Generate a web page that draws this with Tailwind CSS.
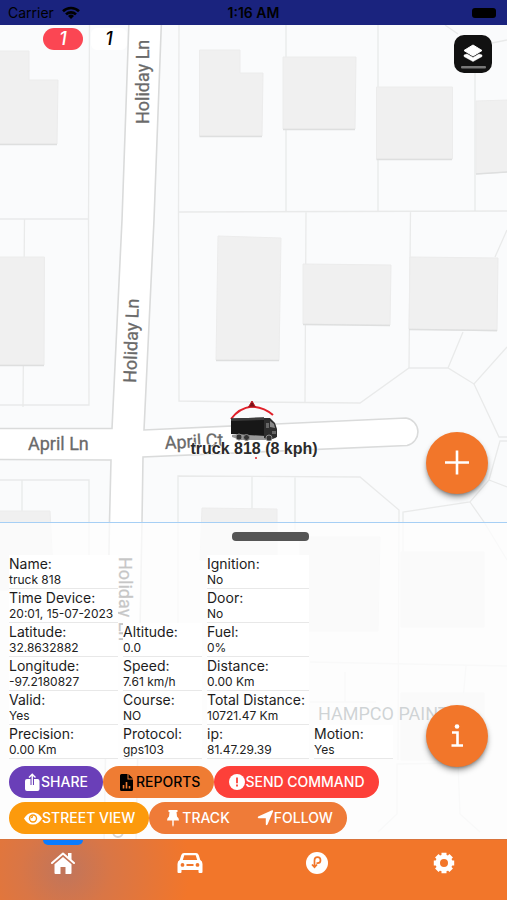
<!DOCTYPE html>
<html lang="en">
<head>
  <meta charset="utf-8">
  <meta name="viewport" content="width=device-width, initial-scale=1">
  <title>truck 818</title>
  <script src="https://cdn.jsdelivr.net/npm/@tailwindcss/browser@4"></script>
</head>
<body class="min-h-screen flex flex-col font-[Inter,sans-serif] text-[#222] bg-[#fafbfc]">

  <!-- status bar -->
  <header class="grid grid-cols-3 items-center h-[25px] px-2 bg-[#1a237e] text-black text-sm">
    <div class="flex items-center gap-2">
      <span>Carrier</span>
      <svg class="w-[18px] h-[13px]" viewBox="0 0 18 13" fill="none" stroke="#000" stroke-width="2.6">
        <path d="M1 5.2a11.5 11.5 0 0 1 16 0"/>
        <path d="M4 8.4a7.2 7.2 0 0 1 10 0"/>
        <path d="M9 13L6 10a4.3 4.3 0 0 1 6 0z" fill="#000" stroke="none"/>
      </svg>
    </div>
    <span class="text-center font-semibold">1:16 AM</span>
    <span class="justify-self-end w-6 h-[10px] mr-[3px] rounded-[3px] bg-black"></span>
  </header>

  <main class="relative flex-1 flex flex-col overflow-hidden">

    <!-- map -->
    <svg class="absolute inset-0 w-full h-full" viewBox="0 25 507 814" preserveAspectRatio="xMidYMid slice">
      <rect x="0" y="25" width="507" height="814" fill="#fafbfc"/>

      <!-- lots -->
      <g fill="none" stroke="#e9eaea" stroke-width="1.3">
        <path d="M89.500 25L88.500 218L89 405H0M0 219H88.500M24.500 219L23 407"/>
        <path d="M179 25L178.500 212L179 401L253 402L360 403L409 368H448L474 384L507 347"/>
        <path d="M179 212L507 211M286 25V211M378 25V211M475 70V211M306 211L305 402M410.500 211L409 368"/>
        <path d="M495 257L507 230M463 332L448 368M474 384L499 437H507M445 25L458 34M492 43L507 40"/>
        <path d="M507 441H500L489 480L470 502L403 512V600M489 480L507 487M470 502L484 522L507 560"/>
        <path d="M178 640V476L360 477L399 510L398 760M252 476V530M295 477V530"/>
        <path d="M0 480H89V560M22 480V512"/>
        <path d="M310 662L507 666M310 702H376M345 672V702M466 666L463 700"/>
        <path d="M378 832L397 814V764L458 763L460 814L480 832"/>
      </g>

      <!-- buildings -->
      <g fill="#f0f0f0" stroke="#ececec" stroke-width="1">
        <path d="M-1 51H29V80H58L57 144H-1z"/>
        <path d="M199.500 50H240V73H263L262 136H199.500z"/>
        <path d="M283 57H356L355 129H283z"/>
        <path d="M376.500 87H452.500V159H376.500z"/>
        <path d="M476 101L508 100V172L476 174z"/>
        <path d="M-1 257H44.500L44 365H-1z"/>
        <path d="M218 236L281 238L279 360.500L216 360z"/>
        <path d="M303 264L391 265L390 325L303 324z"/>
        <path d="M410 257L498 258L497 331L409 329z"/>
        <path d="M-1 511H50L54 590H-1z"/>
        <path d="M202 508L277 509V560H200z"/>
        <path d="M300 537H380L378 631H300z"/>
        <path d="M401 552H484V627H401z"/>
        <path d="M401 693H484V760H401z"/>
      </g>
      <g fill="none" stroke="#dedfdf" stroke-width="1.5">
        <path d="M0 144.500H57M199.500 136.500H262M283 129.500H355M376.500 159.500H452M476 174L507 172M0 365.500H44M216 360.500H279M303 324.500L390 325.500M409 329.500L497 330.500"/>
      </g>

      <!-- roads -->
      <path fill="#fff" stroke="#dadbdb" stroke-width="1.6" d="M129 20L122 220L112 428.500H-5V459.500L111 460L109.500 522L104 845H136L142 522L143 457L407 445.500A14 14 0 0 0 406 418L144 430L154 220L161.500 20z"/>

      <g font-family="Roboto, sans-serif" font-size="18" fill="#6a6a6a" stroke="#6a6a6a" stroke-width=".3">
        <text transform="translate(149 124) rotate(-90)">Holiday Ln</text>
        <text transform="translate(136 383) rotate(-88)">Holiday Ln</text>
        <text x="28" y="450">April Ln</text>
        <text transform="translate(165 449) rotate(-3)">April Ct</text>
        <text transform="translate(119 557) rotate(90)" fill="#222" stroke="#222">Holiday Ln</text>
      </g>
      <path d="M113 832a5 5 0 0 0 10 0" fill="none" stroke="#555" stroke-width="2"/>
      <text x="318" y="720" font-family="Roboto, sans-serif" font-size="18" fill="#46565c">HAMPCO PAINT</text>

      <!-- vehicle marker -->
      <path d="M231 419Q239 408 252 406.500Q264 407 273 415" fill="none" stroke="#e0202a" stroke-width="2"/>
      <path d="M252 401L255.500 407H248.500z" fill="#7a1018" stroke="#c01820"/>
      <g>
        <path d="M232 435H276V438L266 440H240L232 437z" fill="#999"/>
        <path d="M231 418.500L264 417.500L266 436L231 434z" fill="#171717"/>
        <path d="M231 418.500L264 417.500V420L231 421z" fill="#3c3c3c"/>
        <path d="M264 418H270L275 423L277 429V437L270 440L264 438z" fill="#2d2d2d"/>
        <path d="M270 421L274 424L275 428L270 427z" fill="#888"/>
        <path d="M266 423H269V428H266zM272 431H276V434H272z" fill="#666"/>
        <g fill="#333" stroke="#8a8a8a">
          <circle cx="239" cy="437" r="3"/>
          <circle cx="246.500" cy="437.500" r="3"/>
          <circle cx="269" cy="438" r="3"/>
        </g>
      </g>
      <circle cx="256" cy="458" r="1" fill="#e0202a"/>
      <text x="254" y="454" text-anchor="middle" font-family="Liberation Sans, sans-serif" font-size="16" font-weight="bold" fill="#2b2b2b" stroke="#fff" stroke-width="2" stroke-opacity=".6" paint-order="stroke">truck 818 (8 kph)</text>
    </svg>

    <!-- map controls -->
    <div class="relative flex-1 flex flex-col justify-between">
      <div class="flex justify-between pl-[43px] pr-[15px]">
        <div class="flex gap-2 pt-[3px] text-lg italic font-medium text-center">
          <span class="w-10 h-[22px] leading-[22px] rounded-full bg-[#fb4653] text-white">1</span>
          <span class="w-9 h-[22px] leading-[22px] rounded-md bg-white text-black">1</span>
        </div>
        <button type="button" aria-label="Map layers" class="mt-[10px] size-[38px] rounded-[10px] bg-[#111]">
          <svg class="size-[38px]" viewBox="0 0 38 38">
            <path d="M19 10L28 15.500L19 21L10 15.500z" fill="#fff" stroke="#fff" stroke-linejoin="round"/>
            <path d="M10 20L13 19L19 22.500L25 19L28 20V21.500L19 26.500L10 21.500z" fill="#fff" stroke="#fff" stroke-width=".5" stroke-linejoin="round"/>
            <rect x="7" y="31" width="25" height="2.500" rx="1" fill="#777"/>
          </svg>
        </button>
      </div>
      <button type="button" aria-label="Add" class="self-end mr-[19px] mb-7 size-[62px] rounded-full bg-[#f2762a] shadow-md shadow-black/40">
        <svg class="size-[62px]" viewBox="0 0 62 62" stroke="#fff" stroke-width="2.600"><path d="M19 30.500H43M31 18.500V42.500"/></svg>
      </button>
    </div>

    <!-- device panel -->
    <section class="relative border-t border-[#a6cff5] bg-[#fdfdfd]/75 bg-clip-padding px-1 pb-[5px]">
      <div class="flex justify-center pt-[9px] pl-[34px]">
        <span class="w-[77px] h-[9px] rounded bg-[#555]"></span>
      </div>

      <table class="mt-[14px] border-separate border-spacing-x-[5px] border-spacing-y-0 text-xs leading-4 text-left [&_b]:block [&_b]:font-normal [&_b]:text-sm [&_b]:leading-[17px] [&_b]:text-[#1c1c1c] [&_td]:p-0 [&_td]:whitespace-nowrap [&_td:not(:empty)]:bg-white [&_td:not(:empty)]:border-b [&_td:not(:empty)]:border-[#e8e8e8]">
        <tr><td><b>Name:</b>truck 818</td><td></td><td><b>Ignition:</b>No</td><td></td></tr>
        <tr><td><b>Time Device:</b>20:01, 15-07-2023</td><td></td><td><b>Door:</b>No</td><td></td></tr>
        <tr><td><b>Latitude:</b>32.8632882</td><td><b>Altitude:</b>0.0</td><td><b>Fuel:</b>0%</td><td></td></tr>
        <tr><td><b>Longitude:</b>-97.2180827</td><td><b>Speed:</b>7.61 km/h</td><td><b>Distance:</b>0.00 Km</td><td></td></tr>
        <tr><td><b>Valid:</b>Yes</td><td><b>Course:</b>NO</td><td><b>Total Distance:</b>10721.47 Km</td><td></td></tr>
        <tr><td class="min-w-[109px]"><b>Precision:</b>0.00 Km</td><td class="min-w-[79px]"><b>Protocol:</b>gps103</td><td class="min-w-[102px]"><b>ip:</b>81.47.29.39</td><td class="min-w-[79px]"><b>Motion:</b>Yes</td></tr>
      </table>

      <div class="flex flex-col gap-1 mt-[7px] pl-[5px] text-sm font-medium text-white">
        <div class="flex [&>button]:flex [&>button]:items-center [&>button]:h-8 [&>button]:rounded-full [&>button]:whitespace-nowrap">
          <button type="button" class="px-[15px] bg-[#6a3fb8]">
            <svg class="w-[17px] h-[18px]" viewBox="0 0 17 18" fill="#fff"><path d="M3 6H6.500V12H10V6H13.500Q15.500 6 15.500 8V16Q15.500 18 13.500 18H3Q1 18 1 16V8Q1 6 3 6z"/><path d="M8.250 12V1.500M5 4.500L8.250 1.200L11.500 4.500" fill="none" stroke="#fff" stroke-width="1.400"/></svg>
            SHARE
          </button>
          <button type="button" class="pl-[17px] pr-[14px] gap-[3px] bg-[#ef7c33] text-black">
            <svg class="w-[13px] h-[17px]" viewBox="0 0 13 17"><path d="M1.500 0H7.500V5.500H13V15.500Q13 17 11.500 17H1.500Q0 17 0 15.500V1.500Q0 0 1.500 0zM8.500 0L13 4.500H8.500z"/><path d="M3.500 14.500V11M6.500 14.500V8M9.500 14.500V12" stroke="#ef7c33" stroke-width="1.600"/></svg>
            REPORTS
          </button>
          <button type="button" class="pl-[15px] pr-[14px] bg-[#fd4039]">
            <svg class="size-4" viewBox="0 0 16 16"><circle cx="8" cy="8" r="8" fill="#fff"/><path d="M8 3.500V9.200M8 10.600V12.400" stroke="#fd4039" stroke-width="1.800"/></svg>
            SEND COMMAND
          </button>
        </div>
        <div class="flex [&>button]:flex [&>button]:items-center [&>button]:h-8 [&>button]:whitespace-nowrap">
          <button type="button" class="pl-[15px] pr-[14px] rounded-full bg-[#fc9a0c]">
            <svg class="w-[18px] h-[13px]" viewBox="0 0 18 13"><path d="M0 6.500Q3.500 .5 9 .5T18 6.500Q14.500 12.500 9 12.500T0 6.500z" fill="#fff"/><circle cx="9" cy="6.500" r="4.200" fill="#fc9a0c"/><circle cx="9" cy="6.500" r="2.800" fill="#fff"/><path d="M6.500 6.500A2.500 2.500 0 0 1 9 4V5.500z" fill="#fc9a0c"/></svg>
            STREET VIEW
          </button>
          <button type="button" class="pl-[18px] pr-[10px] gap-[3px] rounded-l-full bg-[#ef7b38]">
            <svg class="w-3 h-[17px]" viewBox="0 0 12 17" fill="#fff"><path d="M1.500 0H10.500V2H9.500L10 6.500Q12 8 12 10.500H0Q0 8 2 6.500L2.500 2H1.500zM5.300 10.500H6.700V15L6 17L5.300 15z"/></svg>
            TRACK
          </button>
          <button type="button" class="pl-[17px] pr-[14px] rounded-r-full bg-[#ef7b38]">
            <svg class="w-[17px] h-4" viewBox="0 0 17 16" fill="#fff"><path d="M15 .2Q16.500 0 16 1.500L10.500 14.500Q9.300 16 8.800 14.500V8.200H1.500Q0 7.500 1.200 6.500z"/></svg>
            FOLLOW
          </button>
        </div>
      </div>

      <button type="button" aria-label="Device information" class="absolute right-[19px] bottom-[72px] size-[62px] rounded-full bg-[#f2762a] shadow-md shadow-black/40">
        <svg class="size-[62px]" viewBox="0 0 62 62"><circle cx="31" cy="21.500" r="2.300" fill="#fff"/><path d="M26 27.500H31.500V40M25.500 40.500H37" fill="none" stroke="#fff" stroke-width="2.600"/></svg>
      </button>
    </section>
  </main>

  <!-- tab bar -->
  <nav class="grid grid-cols-4 h-[61px] border-t border-[#d9743c] bg-[#f2762a] bg-[radial-gradient(circle_at_13%_50%,#c0755c_0,#d97646_10%,#f2762a_28%)]">
    <a href="#home" aria-label="Home" class="relative flex justify-center pt-3">
      <span class="absolute top-0 w-10 h-[5px] rounded-b-md bg-[#0a7cff]"></span>
      <svg class="w-6 h-[22px]" viewBox="0 0 24 22"><path d="M1 11L12 1.500L23 11" fill="none" stroke="#fff" stroke-width="2" stroke-linecap="round" stroke-linejoin="round"/><path d="M17 1H20.500V8L17 5zM12 5L20.500 12.300V21Q20.500 22 19.500 22H14.500V15H9.500V22H4.500Q3.500 22 3.500 21V12.300z" fill="#fff"/></svg>
    </a>
    <a href="#vehicles" aria-label="Vehicles" class="flex justify-center pt-[13px]">
      <svg class="w-[26px] h-5" viewBox="0 0 26 20"><path fill="#fff" fill-rule="evenodd" d="M7 0H19Q21 0 21.700 2L23.300 7Q25.500 8 25.500 11V19Q25.500 20 24.500 20H22.500Q21.500 20 21.500 19V17H4.500V19Q4.500 20 3.500 20H1.500Q.5 20 .5 19V11Q.5 8 2.700 7L4.300 2Q5 0 7 0zM7.300 2.300L5.800 7H20.200L18.700 2.300zM5.500 10A1.900 1.900 0 1 0 5.500 13.800A1.900 1.900 0 1 0 5.500 10zM20.500 10A1.900 1.900 0 1 0 20.500 13.800A1.900 1.900 0 1 0 20.500 10zM9.500 11V13H16.500V11z"/></svg>
    </a>
    <a href="#routes" aria-label="Routes" class="flex justify-center pt-3">
      <svg class="size-[22px]" viewBox="0 0 22 22"><circle cx="11" cy="11" r="11" fill="#fff"/><path d="M8.500 14.500V8.200A3 3 0 1 1 11.500 11.200H10.500M6 12.500L8.500 15.200L11 12.500" fill="none" stroke="#f2762a" stroke-width="1.700"/></svg>
    </a>
    <a href="#settings" aria-label="Settings" class="flex justify-center pt-3">
      <svg class="size-[22px]" viewBox="0 0 22 22"><circle cx="11" cy="11" r="6.300" fill="none" stroke="#fff" stroke-width="4.600"/><g stroke="#fff" stroke-width="5"><path d="M11 .8V4M11 18V21.200M.8 11H4M18 11H21.200M3.800 3.800L6 6M16 16L18.200 18.200M3.800 18.200L6 16M16 6L18.200 3.800"/></g></svg>
    </a>
  </nav>

</body>
</html>
